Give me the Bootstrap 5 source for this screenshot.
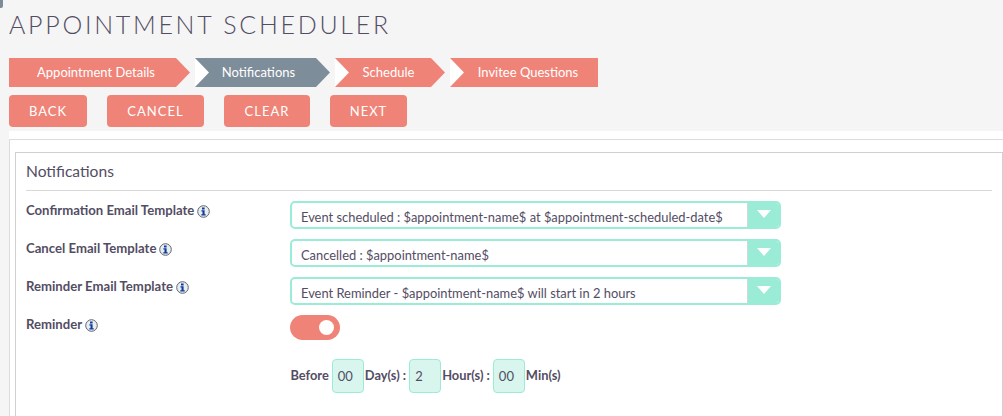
<!DOCTYPE html>
<html lang="en">
<head>
<meta charset="utf-8">
<title>Appointment Scheduler</title>
<link href="https://cdn.jsdelivr.net/npm/bootstrap@5.3.0/dist/css/bootstrap.min.css" rel="stylesheet">
<style>
html,body{height:416px;overflow:hidden}
body{background:#f5f5f5;font-family:Lato,"Liberation Sans",sans-serif;color:#534d64;font-size:13px;position:relative}
.corner-nub{position:absolute;left:0;top:0;width:3px;height:8px;background:#7c8b98;border-radius:0 0 2px 0}
.page-title{font-family:Lato,sans-serif;font-weight:300;font-size:25px;letter-spacing:2.72px;line-height:30px;margin:0;padding:9px 0 0 9px;color:#534d64;height:58px}
.wizard{padding-left:9px;gap:5px;height:29px}
.wstep{position:relative;height:29px;line-height:29px;color:#fff;background:#f08377;font-size:13px;text-align:center;clip-path:polygon(0 0,calc(100% - 14px) 0,100% 50%,calc(100% - 14px) 100%,0 100%)}
.wstep.wactive{background:#7e8d9a}
.wstep.wnotch::before{content:"";position:absolute;left:0;top:0;width:14px;height:29px;background:#fff;clip-path:polygon(0 0,100% 50%,0 100%)}
.wstep.wlast{clip-path:none}
.w1{width:181px;padding-right:7px}.w2{width:135px;padding-right:8px}.w3{width:110px;padding-right:3px}.w4{width:148px;padding-left:8px}
.action-row{padding:8px 0 0 9px;gap:20px;height:44px}
.act-btn{height:32px;padding:2px 0 0;font-size:13px;letter-spacing:1px;border:0;border-radius:4px;background:#f08377;color:#fff;text-transform:uppercase;font-family:Lato,sans-serif}
.act-btn:hover{background:#f08377;color:#fff}
.b1{width:78px}.b2{width:97px}.b3{width:86px}.b4{width:77px}
.work-area{margin-left:9px;background:#fff;height:285px;padding-top:8px}
.outer-frame{border-top:1px solid #dcdcdc;border-left:1px solid #dcdcdc;height:277px;padding:12px 0 0 5px}
.inner-panel{border:1px solid #d0d0d0;border-bottom:0;height:265px;padding:0 10px 0 10px}
.panel-head{font-size:15.6px;line-height:20px;color:#534d64;padding-top:8px;height:38px;border-bottom:1px solid #d8d8d8;margin-bottom:10px}
.form-line{height:28px;margin-bottom:10px}
.lbl{width:264px;font-weight:700;font-size:13.15px;line-height:18px;color:#534d64}
.info-ico{width:13px;height:13px;vertical-align:-2.5px;margin-left:3px}
.tpl-select{width:491px;height:28px;border:2px solid #9becd6;border-radius:5px;background:#fff;overflow:hidden}
.tpl-text{flex:1;font-size:12.9px;line-height:28px;padding-left:9px;color:#534d64;white-space:nowrap}
.tpl-arrow{width:32px;background:#9becd6;border-left:1px solid #cfd8d5;display:flex;align-items:center;justify-content:center;padding-bottom:2px}
.tpl-arrow i{display:block;width:0;height:0;border-left:7.5px solid transparent;border-right:7.5px solid transparent;border-top:8px solid #fff}
.toggle-track{width:50px;height:25px;border-radius:13px;background:#f08377;position:relative}
.toggle-track::after{content:"";position:absolute;right:6px;top:5px;width:15px;height:15px;border-radius:50%;background:#fff}
.before-line{padding-left:264.4px;height:34px;margin-top:16px;font-weight:700;font-size:12.85px;color:#534d64;gap:1px}
.time-box{width:32px;height:34px;margin-left:2px;background:#d8f5ee;border:1px solid #9becd6;border-radius:4px;font-weight:400;color:#534d64;font-size:13px;padding:0 0 0 5px;line-height:32px}
</style>
</head>
<body>
<div class="corner-nub"></div>
<h1 class="page-title">APPOINTMENT SCHEDULER</h1>
<div class="wizard d-flex">
  <div class="wstep w1">Appointment Details</div>
  <div class="wstep wactive wnotch w2">Notifications</div>
  <div class="wstep wnotch w3">Schedule</div>
  <div class="wstep wnotch wlast w4">Invitee Questions</div>
</div>
<div class="action-row d-flex">
  <button class="btn act-btn b1" type="button">Back</button>
  <button class="btn act-btn b2" type="button">Cancel</button>
  <button class="btn act-btn b3" type="button">Clear</button>
  <button class="btn act-btn b4" type="button">Next</button>
</div>
<div class="work-area">
  <div class="outer-frame">
    <div class="inner-panel">
      <div class="panel-head">Notifications</div>
      <div class="form-line d-flex">
        <div class="lbl">Confirmation Email Template<svg class="info-ico" viewBox="0 0 13 13"><circle cx="6.5" cy="6.5" r="5.8" fill="#e8edf2" stroke="#5f646a"/><path d="M5 2.6h2.6v1.8H5zM4.4 5.2h3.2v4h1.1v1.3H4.3V9.2h1.2V6.5H4.4z" fill="#123a9c"/></svg></div>
        <div class="tpl-select d-flex"><span class="tpl-text">Event scheduled : $appointment-name$ at $appointment-scheduled-date$</span><span class="tpl-arrow"><i></i></span></div>
      </div>
      <div class="form-line d-flex">
        <div class="lbl">Cancel Email Template<svg class="info-ico" viewBox="0 0 13 13"><circle cx="6.5" cy="6.5" r="5.8" fill="#e8edf2" stroke="#5f646a"/><path d="M5 2.6h2.6v1.8H5zM4.4 5.2h3.2v4h1.1v1.3H4.3V9.2h1.2V6.5H4.4z" fill="#123a9c"/></svg></div>
        <div class="tpl-select d-flex"><span class="tpl-text">Cancelled : $appointment-name$</span><span class="tpl-arrow"><i></i></span></div>
      </div>
      <div class="form-line d-flex">
        <div class="lbl">Reminder Email Template<svg class="info-ico" viewBox="0 0 13 13"><circle cx="6.5" cy="6.5" r="5.8" fill="#e8edf2" stroke="#5f646a"/><path d="M5 2.6h2.6v1.8H5zM4.4 5.2h3.2v4h1.1v1.3H4.3V9.2h1.2V6.5H4.4z" fill="#123a9c"/></svg></div>
        <div class="tpl-select d-flex"><span class="tpl-text">Event Reminder - $appointment-name$ will start in 2 hours</span><span class="tpl-arrow"><i></i></span></div>
      </div>
      <div class="form-line d-flex">
        <div class="lbl">Reminder<svg class="info-ico" viewBox="0 0 13 13"><circle cx="6.5" cy="6.5" r="5.8" fill="#e8edf2" stroke="#5f646a"/><path d="M5 2.6h2.6v1.8H5zM4.4 5.2h3.2v4h1.1v1.3H4.3V9.2h1.2V6.5H4.4z" fill="#123a9c"/></svg></div>
        <div class="toggle-track"></div>
      </div>
      <div class="before-line d-flex align-items-center">
        <span>Before</span><span class="time-box">00</span><span>Day(s) :</span><span class="time-box">2</span><span>Hour(s) :</span><span class="time-box">00</span><span>Min(s)</span>
      </div>
    </div>
  </div>
</div>
</body>
</html>
